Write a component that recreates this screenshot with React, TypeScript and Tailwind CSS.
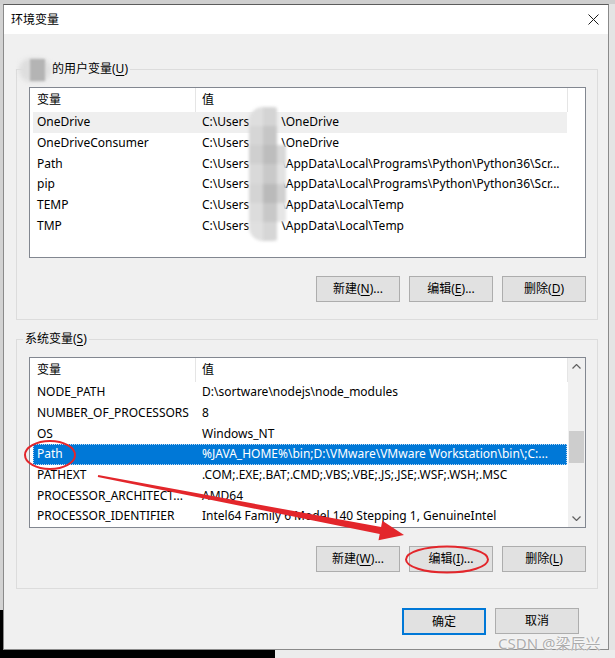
import type { ReactNode } from "react";

type Row = { name: string; value: ReactNode; hover?: boolean; selected?: boolean };

function Masked({ rest }: { rest: string }) {
  return (
    <>
      {"C:\\Users"}
      <span className="inline-block w-[32px]" />
      {rest}
    </>
  );
}

const pyPath = "\\AppData\\Local\\Programs\\Python\\Python36\\Scr...";
const tempPath = "\\AppData\\Local\\Temp";

const userRows: Row[] = [
  { name: "OneDrive", value: <Masked rest={"\\OneDrive"} />, hover: true },
  { name: "OneDriveConsumer", value: <Masked rest={"\\OneDrive"} /> },
  { name: "Path", value: <Masked rest={pyPath} /> },
  { name: "pip", value: <Masked rest={pyPath} /> },
  { name: "TEMP", value: <Masked rest={tempPath} /> },
  { name: "TMP", value: <Masked rest={tempPath} /> },
];

const systemRows: Row[] = [
  { name: "NODE_PATH", value: "D:\\sortware\\nodejs\\node_modules" },
  { name: "NUMBER_OF_PROCESSORS", value: "8" },
  { name: "OS", value: "Windows_NT" },
  { name: "Path", value: "%JAVA_HOME%\\bin;D:\\VMware\\VMware Workstation\\bin\\;C:...", selected: true },
  { name: "PATHEXT", value: ".COM;.EXE;.BAT;.CMD;.VBS;.VBE;.JS;.JSE;.WSF;.WSH;.MSC" },
  { name: "PROCESSOR_ARCHITECT...", value: "AMD64" },
  { name: "PROCESSOR_IDENTIFIER", value: "Intel64 Family 6 Model 140 Stepping 1, GenuineIntel" },
];

function Chevron({ up }: { up?: boolean }) {
  return (
    <svg width="9" height="5" viewBox="0 0 9 5">
      <polyline
        points={up ? "0.5,4.5 4.5,0.5 8.5,4.5" : "0.5,0.5 4.5,4.5 8.5,0.5"}
        fill="none"
        stroke="#606060"
        strokeWidth="1.2"
      />
    </svg>
  );
}

function Scrollbar() {
  return (
    <div className="flex w-[17px] flex-col bg-[#f0f0f0]">
      <div className="flex h-[17px] items-center justify-center">
        <Chevron up />
      </div>
      <div className="flex-1">
        <div className="mx-[1px] mt-[56px] h-[32px] bg-[#cdcdcd]" />
      </div>
      <div className="flex h-[17px] items-center justify-center">
        <Chevron />
      </div>
    </div>
  );
}

function ListBox({ rows, scroll, children }: { rows: Row[]; scroll?: boolean; children?: ReactNode }) {
  return (
    <div className="relative flex h-[171px] w-[557px] border border-[#828790] bg-white">
      <div className="flex w-[538px] flex-col">
        <div className="flex h-[24px] shrink-0 items-center">
          <div className="w-[165px] pl-[7px] leading-[16px]">变量</div>
          <div className="h-full w-px bg-[#e5e5e5]" />
          <div className="w-[371px] pl-[6px] leading-[16px]">值</div>
          <div className="h-full w-px bg-[#e5e5e5]" />
        </div>
        {rows.map((r) => (
          <div
            key={r.name}
            className={`ml-[3px] flex h-[20.67px] w-[534px] shrink-0 items-center whitespace-nowrap leading-[16px] ${
              r.selected
                ? "bg-[#0078d7] text-white outline-1 outline-dotted -outline-offset-1 outline-[#bcd8f3]"
                : r.hover
                ? "bg-[#efefef]"
                : ""
            }`}
          >
            <div className="w-[165px] shrink-0 overflow-hidden pl-[4px]">{r.name}</div>
            <div className="flex-1 overflow-hidden pl-[4px]">{r.value}</div>
          </div>
        ))}
      </div>
      {scroll && <Scrollbar />}
      {children}
    </div>
  );
}

function Btn({ children, primary }: { children: ReactNode; primary?: boolean }) {
  return (
    <button
      className={`flex w-[84px] items-center justify-center bg-[#e1e1e1] text-[12px] leading-[16px] text-black ${
        primary ? "h-[27px] border-2 border-[#0078d7]" : "h-[26px] border border-[#adadad]"
      }`}
    >
      {children}
    </button>
  );
}

function Mnemonic({ label, k, dots }: { label: string; k: string; dots?: boolean }) {
  return (
    <span>
      {label}(<span className="underline underline-offset-2">{k}</span>){dots ? "..." : ""}
    </span>
  );
}

// pixelated redaction over the user name in the value column
function Redaction() {
  const cells = [
    "#dedede", "#d4d4d4", "transparent",
    "#d6d6d6", "#c6c6c6", "transparent",
    "#cfcfcf", "#bdbdbd", "#d8d8d8",
    "#d9d9d9", "#c9c9c9", "#e2e2e2",
    "#d4d4d4", "#bababa", "#d0d0d0",
    "#dcdcdc", "#c8c8c8", "#e6e6e6",
    "#e0e0e0", "#d6d6d6", "transparent",
  ];
  return (
    <div className="absolute left-[219px] top-[19px] grid h-[134px] w-[37px] grid-cols-[14px_14px_9px] overflow-hidden rounded-[14px] blur-[1.5px]">
      {cells.map((c, i) => (
        <div key={i} style={{ backgroundColor: c }} />
      ))}
    </div>
  );
}

export default function App() {
  return (
    <div className="relative flex h-[658px] w-[615px] flex-col overflow-hidden bg-[#d6d6d6] text-[12px] text-black font-['Noto_Sans','Noto_Sans_CJK_SC',sans-serif]">
      <div className="h-[4px] shrink-0 bg-[#cfcfcf]" />
      <div className="flex h-[646px] shrink-0">
        <div className="flex w-[3px] flex-col">
          <div className="h-[606px] bg-[#d2d2d2]" />
          <div className="flex-1 bg-black" />
        </div>
        <div className="flex h-[646px] w-[606px] flex-col border border-[#8a8a8a] border-t-[#5c5c5c] bg-[#f0f0f0]">
          <div className="flex h-[29px] shrink-0 items-center justify-between bg-white pl-[7px] pr-[9px]">
            <span className="leading-[16px]">环境变量</span>
            <svg width="11" height="11" viewBox="0 0 11 11">
              <path d="M0.5 0.5 L10.5 10.5 M10.5 0.5 L0.5 10.5" stroke="#1a1a1a" strokeWidth="1" />
            </svg>
          </div>

          <fieldset className="ml-[12px] mt-[27px] w-[582px] border border-[#dcdcdc] pb-[17px] pl-[12px] pr-[11px] pt-[10px]">
            <legend className="-ml-[6px] px-[2px] leading-[16px]">
              <span className="relative mr-[1px] inline-block h-[12px] w-[26px] align-middle">
                <span className="absolute -left-[6px] -top-[6px] h-[24px] w-[32px] rounded-full bg-[#dedede] blur-[2px]" />
                <span className="absolute left-[5px] -top-[5px] h-[22px] w-[15px] bg-[#b4b4b4] blur-[1px]" />
              </span>
              的用户变量(<span className="underline underline-offset-2">U</span>)
            </legend>
            <ListBox rows={userRows}>
              <Redaction />
            </ListBox>
            <div className="mt-[18px] flex justify-end gap-[9px]">
              <Btn><Mnemonic label="新建" k="N" dots /></Btn>
              <Btn><Mnemonic label="编辑" k="E" dots /></Btn>
              <Btn><Mnemonic label="删除" k="D" /></Btn>
            </div>
          </fieldset>

          <fieldset className="ml-[12px] mt-[11px] w-[582px] border border-[#dcdcdc] pb-[16px] pl-[12px] pr-[11px] pt-[10px]">
            <legend className="-ml-[6px] px-[2px] leading-[16px]">
              系统变量(<span className="underline underline-offset-2">S</span>)
            </legend>
            <ListBox rows={systemRows} scroll />
            <div className="mt-[18px] flex justify-end gap-[9px]">
              <Btn><Mnemonic label="新建" k="W" dots /></Btn>
              <Btn><Mnemonic label="编辑" k="I" dots /></Btn>
              <Btn><Mnemonic label="删除" k="L" /></Btn>
            </div>
          </fieldset>

          <div className="mt-[19px] flex justify-end gap-[9px] pr-[29px]">
            <Btn primary>确定</Btn>
            <Btn>取消</Btn>
          </div>
        </div>
        <div className="flex-1 bg-[#e4e4e4]" />
      </div>
      <div className="flex h-[8px] shrink-0">
        <div className="w-[275px] bg-black" />
        <div className="flex-1 bg-[#ececec]" />
      </div>

      <span className="pointer-events-none absolute left-[498px] top-[636px] text-[15px] leading-[15px] text-[#adadad] [text-shadow:0_0_2px_#ffffff,0_0_1px_#ffffff]">
        CSDN @梁辰兴
      </span>

      <svg className="pointer-events-none absolute left-0 top-0" width="615" height="658" viewBox="0 0 615 658">
        <ellipse cx="50" cy="455" rx="25" ry="14" fill="none" stroke="#e3262b" strokeWidth="2" />
        <ellipse cx="447" cy="559.5" rx="41" ry="13" fill="none" stroke="#e3262b" strokeWidth="2" />
        <polygon
          points="98.2,475 381.1,527.1 382.3,520.7 404,535 378.5,540.3 379.7,533.9 97.8,477"
          fill="#e3262b"
        />
      </svg>
    </div>
  );
}
